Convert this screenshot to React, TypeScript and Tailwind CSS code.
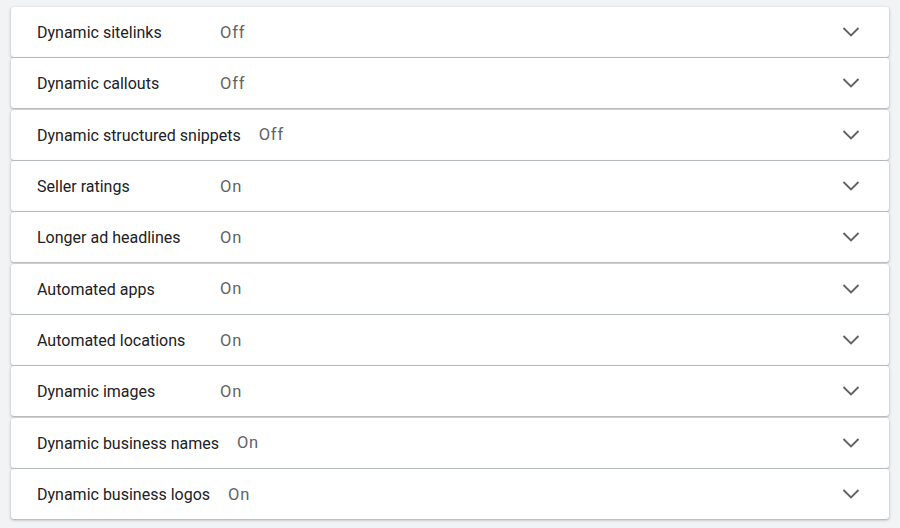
const rows = [
  { label: 'Dynamic sitelinks', value: 'Off' },
  { label: 'Dynamic callouts', value: 'Off' },
  { label: 'Dynamic structured snippets', value: 'Off' },
  { label: 'Seller ratings', value: 'On' },
  { label: 'Longer ad headlines', value: 'On' },
  { label: 'Automated apps', value: 'On' },
  { label: 'Automated locations', value: 'On' },
  { label: 'Dynamic images', value: 'On' },
  { label: 'Dynamic business names', value: 'On' },
  { label: 'Dynamic business logos', value: 'On' },
]

function Chevron() {
  return (
    <svg width="18" height="12" viewBox="0 0 18 12" className="text-[#5f6368]">
      <polyline points="1.5,2 9,9.5 16.5,2" fill="none" stroke="currentColor" strokeWidth="1.9" />
    </svg>
  )
}

export default function App() {
  return (
    <div className="w-[900px] h-[528px] bg-[#f1f3f4] px-[11px] pt-[7px] font-['Roboto',sans-serif]">
      <div className="flex flex-col gap-[1.35px]">
        {rows.map((r) => (
          <div
            key={r.label}
            className="h-[50px] bg-white rounded-[3px] shadow-[0_1px_2px_rgba(60,64,67,0.3),0_1px_3px_1px_rgba(60,64,67,0.1)] flex items-center pl-[26px] pr-[29px] pt-[2px]"
          >
            <span className="min-w-[165px] mr-[18px] text-[16px] text-[#202124]">{r.label}</span>
            <span className="text-[16.5px] text-[#5f6368] tracking-[0.8px]">{r.value}</span>
            <div className="ml-auto flex items-center -mt-[2px]">
              <Chevron />
            </div>
          </div>
        ))}
      </div>
    </div>
  )
}
